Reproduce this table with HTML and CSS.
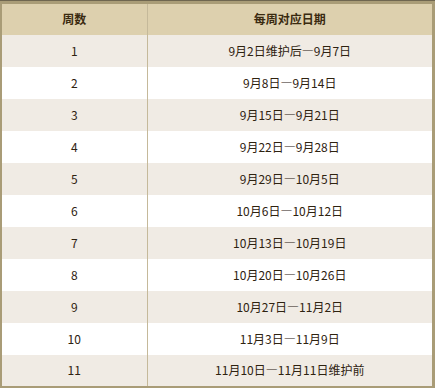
FILE: index.html
```html
<!DOCTYPE html>
<html lang="zh-CN">
<head>
    <meta charset="UTF-8">
    <title>周数对应日期</title>
    <link rel="stylesheet" href="styles.css">
</head>
<body>
    <div class="wrap">
        <table class="week-table">
            <thead>
                <tr>
                    <th class="col-week">周数</th>
                    <th>每周对应日期</th>
                </tr>
            </thead>
            <tbody>
                <tr><td class="col-week">1</td><td>9月2日维护后—9月7日</td></tr>
                <tr><td class="col-week">2</td><td>9月8日—9月14日</td></tr>
                <tr><td class="col-week">3</td><td>9月15日—9月21日</td></tr>
                <tr><td class="col-week">4</td><td>9月22日—9月28日</td></tr>
                <tr><td class="col-week">5</td><td>9月29日—10月5日</td></tr>
                <tr><td class="col-week">6</td><td>10月6日—10月12日</td></tr>
                <tr><td class="col-week">7</td><td>10月13日—10月19日</td></tr>
                <tr><td class="col-week">8</td><td>10月20日—10月26日</td></tr>
                <tr><td class="col-week">9</td><td>10月27日—11月2日</td></tr>
                <tr><td class="col-week">10</td><td>11月3日—11月9日</td></tr>
                <tr><td class="col-week">11</td><td>11月10日—11月11日维护前</td></tr>
            </tbody>
        </table>
    </div>
</body>
</html>
```

FILE: styles.css
```css
* {
    margin: 0;
    padding: 0;
    box-sizing: border-box;
}

body {
    background: #fff;
    font-family: "Noto Sans CJK SC", "Liberation Sans", sans-serif;
    font-size: 12px;
    color: #2e2210;
}

/* 外框 */
.wrap {
    width: 435px;
    height: 390px;
    border-top: 1px solid #6f6650;
}

.week-table {
    width: 435px;
    border-collapse: collapse;
    border-top: 3px solid #a99c77;
    border-left: 2px solid #a99c77;
    border-right: 3px solid #a99c77;
    border-bottom: 2px solid #a99c77;
    table-layout: fixed;
}

.week-table th,
.week-table td {
    height: 32px;
    text-align: center;
    vertical-align: middle;
    line-height: 16px;
    padding: 0;
}

.week-table th {
    background-color: #ddd0ae;
    font-weight: 700;
    font-size: 12px;
    color: #3a2a10;
}

.week-table .col-week {
    width: 146px;
    border-right: 1px solid #c5b99a;
}

.week-table tbody tr:nth-child(odd) {
    background-color: #f0ebe4;
}

.week-table tbody tr:nth-child(even) {
    background-color: #fff;
}
```
